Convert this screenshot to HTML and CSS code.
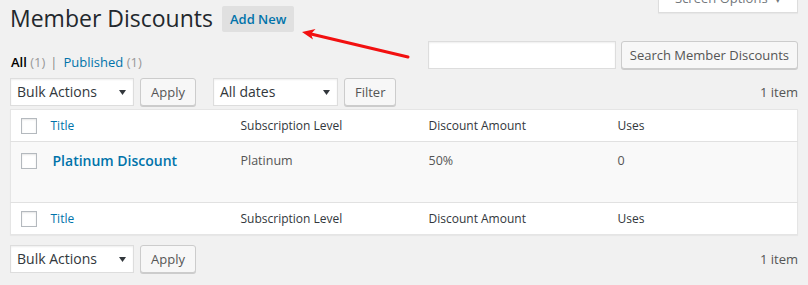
FILE: index.html
```html
<!DOCTYPE html>
<html lang="en">
<head>
  <meta charset="UTF-8" />
  <meta name="viewport" content="width=device-width, initial-scale=1" />
  <title>Member Discounts</title>
  <link rel="stylesheet" href="styles.css">
</head>
<body>
  <div class="page">

    <!-- Screen options tab (sits over the top edge) -->
    <div class="screen-options">Screen Options <span class="caret">&#9662;</span></div>

    <!-- Heading -->
    <header class="page-header">
      <h1>Member Discounts</h1>
      <a href="#" class="add-new">Add New</a>
    </header>

    <!-- Views + search -->
    <div class="views-row">
      <ul class="subsubsub">
        <li class="current">All <span class="count">(1)</span></li>
        <li class="sep">|</li>
        <li><a href="#">Published</a> <span class="count">(1)</span></li>
      </ul>
      <form class="search-box" onsubmit="return false">
        <input type="search" class="search-input" aria-label="Search Member Discounts" />
        <button type="submit" class="button">Search Member Discounts</button>
      </form>
    </div>

    <!-- Top table nav -->
    <div class="tablenav">
      <div class="actions">
        <div class="select select-bulk">Bulk Actions
          <svg width="7" height="5" viewBox="0 0 7 5"><polygon points="0,0 7,0 3.5,5" fill="#32373c"/></svg>
        </div>
        <button type="button" class="button">Apply</button>
      </div>
      <div class="actions">
        <div class="select select-dates">All dates
          <svg width="7" height="5" viewBox="0 0 7 5"><polygon points="0,0 7,0 3.5,5" fill="#32373c"/></svg>
        </div>
        <button type="button" class="button">Filter</button>
      </div>
      <span class="displaying-num">1 item</span>
    </div>

    <!-- List table -->
    <table class="list-table">
      <colgroup>
        <col class="col-cb" />
        <col class="col-title" />
        <col class="col-level" />
        <col class="col-amount" />
        <col />
      </colgroup>
      <thead>
        <tr>
          <th class="check-column"><input type="checkbox" class="cb" /></th>
          <th><a href="#">Title</a></th>
          <th>Subscription Level</th>
          <th>Discount Amount</th>
          <th>Uses</th>
        </tr>
      </thead>
      <tbody>
        <tr>
          <td class="check-column"><input type="checkbox" class="cb" /></td>
          <td class="title-cell"><a href="#" class="row-title">Platinum Discount</a></td>
          <td>Platinum</td>
          <td>50%</td>
          <td>0</td>
        </tr>
      </tbody>
      <tfoot>
        <tr>
          <th class="check-column"><input type="checkbox" class="cb" /></th>
          <th><a href="#">Title</a></th>
          <th>Subscription Level</th>
          <th>Discount Amount</th>
          <th>Uses</th>
        </tr>
      </tfoot>
    </table>

    <!-- Bottom table nav -->
    <div class="tablenav tablenav-bottom">
      <div class="actions">
        <div class="select select-bulk">Bulk Actions
          <svg width="7" height="5" viewBox="0 0 7 5"><polygon points="0,0 7,0 3.5,5" fill="#32373c"/></svg>
        </div>
        <button type="button" class="button">Apply</button>
      </div>
      <span class="displaying-num">1 item</span>
    </div>

    <!-- Annotation arrow pointing at Add New -->
    <svg class="annotation" width="808" height="285" viewBox="0 0 808 285">
      <line x1="408" y1="57" x2="311" y2="34" stroke="#f21010" stroke-width="3" stroke-linecap="round"/>
      <polygon points="302,32 315.5,29 311,34 313,39.5" fill="#f21010"/>
    </svg>

  </div>
</body>
</html>
```

FILE: styles.css
```css
/* Base */
body {
  margin: 0;
  background: #f1f1f1;
  color: #444;
  font-family: 'Open Sans', 'Liberation Sans', sans-serif;
  font-size: 13px;
  line-height: 1.4;
}

a {
  color: #0073aa;
  text-decoration: none;
}

.page {
  position: relative;
  padding: 0 10px;
  height: 285px;
  overflow: hidden;
}

/* Screen options tab */
.screen-options {
  position: absolute;
  top: -15px;
  right: 10px;
  width: 138px;
  height: 27px;
  line-height: 26px;
  background: #fff;
  border: 1px solid #ddd;
  border-top: none;
  box-shadow: 0 1px 1px rgba(0, 0, 0, 0.04);
  color: #72777c;
  text-align: center;
}
.screen-options .caret {
  font-size: 11px;
  margin-left: 4px;
}

/* Heading */
.page-header {
  display: flex;
  align-items: flex-start;
  padding-top: 3px;
}
.page-header h1 {
  margin: 0;
  font-size: 23px;
  font-weight: 400;
  line-height: 30px;
  color: #23282d;
}
.add-new {
  margin: 3px 0 0 9px;
  padding: 4px 8px;
  line-height: 18px;
  background: #e0e0e0;
  border-radius: 2px;
  font-weight: 600;
  color: #0073aa;
}

/* Views + search row */
.views-row {
  display: flex;
  justify-content: space-between;
  align-items: flex-start;
  margin-top: 8px;
}
.subsubsub {
  list-style: none;
  margin: 12px 0 0 1px;
  padding: 0;
  display: flex;
  gap: 5px;
  line-height: 18px;
  color: #666;
}
.subsubsub .current {
  color: #000;
  font-weight: 600;
}
.subsubsub .count {
  color: #999;
  font-weight: 400;
}
.subsubsub .sep {
  color: #888;
  margin: 0 1px 0 0;
}
.search-box {
  display: flex;
  gap: 5px;
  margin: 0;
}
.search-box .button {
  padding: 0 8px;
}
.search-input {
  width: 188px;
  height: 28px;
  margin: 0;
  box-sizing: border-box;
  border: 1px solid #ddd;
  background: #fff;
  box-shadow: inset 0 1px 2px rgba(0, 0, 0, 0.07);
  font-family: inherit;
}

/* Buttons */
.button {
  height: 28px;
  margin: 0;
  padding: 0 10px;
  box-sizing: border-box;
  border: 1px solid #ccc;
  border-radius: 3px;
  background: #f7f7f7;
  box-shadow: 0 1px 0 #ccc;
  color: #555;
  font-family: inherit;
  font-size: 13px;
  line-height: 26px;
}

/* Table nav */
.tablenav {
  display: flex;
  align-items: center;
  height: 28px;
  margin-top: 7px;
  gap: 17px;
}
.tablenav .actions {
  display: flex;
  gap: 6px;
}
.select {
  height: 28px;
  box-sizing: border-box;
  border: 1px solid #ddd;
  background: #fff;
  box-shadow: inset 0 1px 2px rgba(0, 0, 0, 0.07);
  padding: 0 7px 0 6px;
  display: flex;
  align-items: center;
  justify-content: space-between;
  font-size: 14px;
  color: #32373c;
}
.select-bulk {
  width: 124px;
}
.select-dates {
  width: 125px;
}
.displaying-num {
  margin-left: auto;
  color: #555;
  line-height: 28px;
}
.tablenav-bottom {
  margin-top: 10px;
}

/* List table */
.list-table {
  width: 100%;
  margin-top: 3px;
  border-collapse: collapse;
  table-layout: fixed;
  background: #fff;
  border: 1px solid #e5e5e5;
  box-shadow: 0 1px 1px rgba(0, 0, 0, 0.04);
  font-size: 12px;
}
.col-cb {
  width: 30px;
}
.col-title {
  width: 190px;
}
.col-level {
  width: 188px;
}
.col-amount {
  width: 189px;
}
.list-table th {
  height: 32px;
  box-sizing: border-box;
  padding: 7px 10px;
  line-height: 17px;
  text-align: left;
  font-weight: 400;
  color: #32373c;
}
.list-table thead th {
  border-bottom: 1px solid #e1e1e1;
}
.list-table tfoot th {
  border-top: 1px solid #e1e1e1;
}
.list-table tbody tr {
  height: 61px;
  background: #f9f9f9;
}
.list-table td {
  vertical-align: top;
  padding: 10px 10px 0;
  line-height: 18px;
  font-size: 12.5px;
  color: #555;
}
.list-table .check-column {
  padding: 0 0 0 10px;
  vertical-align: middle;
}
.list-table td.check-column {
  vertical-align: top;
  padding-top: 11px;
}
.list-table .title-cell {
  padding-left: 12px;
}
.row-title {
  font-size: 14px;
  font-weight: 600;
}
.cb {
  appearance: none;
  -webkit-appearance: none;
  display: block;
  width: 16px;
  height: 16px;
  margin: 0;
  border: 1px solid #b4b9be;
  background: #fff;
  box-shadow: inset 0 1px 2px rgba(0, 0, 0, 0.1);
}

/* Annotation overlay */
.annotation {
  position: absolute;
  top: 0;
  left: 0;
  pointer-events: none;
}
```
